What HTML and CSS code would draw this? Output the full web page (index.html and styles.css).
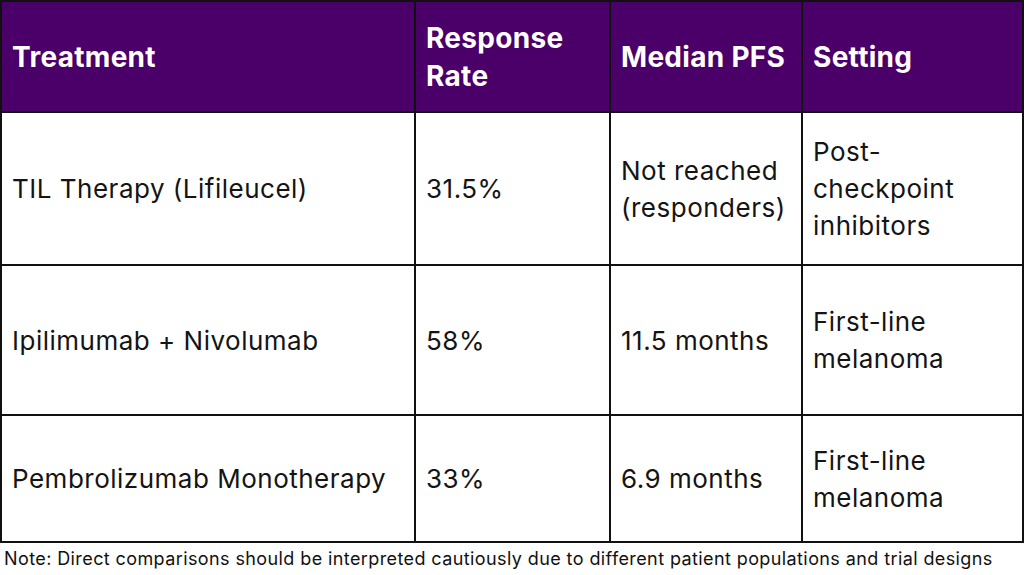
FILE: index.html
```html
<!DOCTYPE html>
<html lang="en">
<head>
<meta charset="utf-8">
<link rel="stylesheet" href="styles.css">
</head>
<body>
<div class="wrap">
<table class="cmp">
  <colgroup>
    <col class="c1"><col class="c2"><col class="c3"><col class="c4">
  </colgroup>
  <thead>
    <tr class="r-head">
      <th>Treatment</th>
      <th>Response Rate</th>
      <th>Median PFS</th>
      <th>Setting</th>
    </tr>
  </thead>
  <tbody>
    <tr class="r1">
      <td>TIL Therapy (Lifileucel)</td>
      <td>31.5%</td>
      <td>Not reached (responders)</td>
      <td>Post-checkpoint inhibitors</td>
    </tr>
    <tr class="r2">
      <td>Ipilimumab + Nivolumab</td>
      <td>58%</td>
      <td>11.5 months</td>
      <td>First-line melanoma</td>
    </tr>
    <tr class="r3">
      <td>Pembrolizumab Monotherapy</td>
      <td>33%</td>
      <td>6.9 months</td>
      <td>First-line melanoma</td>
    </tr>
  </tbody>
</table>
<p class="note">Note: Direct comparisons should be interpreted cautiously due to different patient populations and trial designs</p>
</div>
</body>
</html>
```

FILE: styles.css
```css
html, body {
  margin: 0;
  padding: 0;
  background: #ffffff;
}
.wrap {
  width: 1024px;
  font-family: Inter, "Noto Sans", sans-serif;
  color: #111111;
}
.cmp {
  border-collapse: collapse;
  table-layout: fixed;
  width: 1022px;
  margin-left: 0;
}
.c1 { width: 414px; }
.c2 { width: 195px; }
.c3 { width: 192px; }
.c4 { width: 221px; }
.cmp th, .cmp td {
  border: 2px solid #111111;
  text-align: left;
  vertical-align: middle;
  padding: 0 8px 0 10px;
}
.cmp th {
  background: #4a0068;
  color: #ffffff;
  font-weight: 700;
  font-size: 28px;
  line-height: 38px;
  letter-spacing: 0.3px;
}
.cmp td {
  font-size: 26px;
  font-weight: 400;
  line-height: 37px;
  letter-spacing: 0.5px;
  color: #141414;
}
.r-head { height: 111px; }
.r1 { height: 153px; }
.r2 { height: 150px; }
.r3 { height: 127px; }
.note {
  margin: 0;
  padding: 4px 0 0 4px;
  font-size: 18px;
  line-height: 24px;
  letter-spacing: 0.4px;
  color: #111111;
  white-space: nowrap;
}
```
